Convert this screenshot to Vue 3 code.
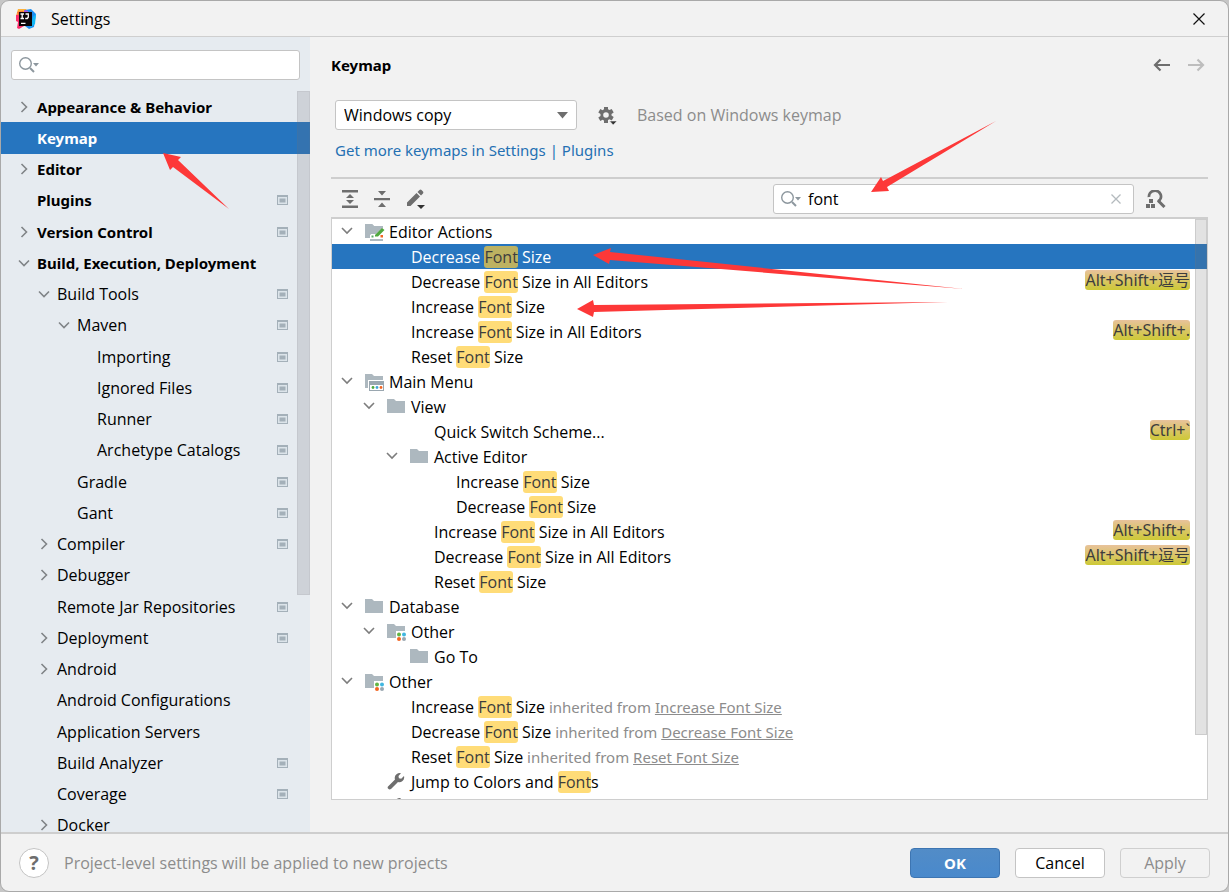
<script setup>
import { ref } from 'vue'

const sideQuery = ref('')
const query = ref('font')
const keymap = ref('Windows copy')

const sections = [
  { t: 'Appearance & Behavior', l: 0, a: 'right' },
  { t: 'Keymap', l: 0, selected: true },
  { t: 'Editor', l: 0, a: 'right' },
  { t: 'Plugins', l: 0, p: true },
  { t: 'Version Control', l: 0, a: 'right', p: true },
  { t: 'Build, Execution, Deployment', l: 0, a: 'down' },
  { t: 'Build Tools', l: 1, a: 'down', p: true },
  { t: 'Maven', l: 2, a: 'down', p: true },
  { t: 'Importing', l: 3, p: true },
  { t: 'Ignored Files', l: 3, p: true },
  { t: 'Runner', l: 3, p: true },
  { t: 'Archetype Catalogs', l: 3, p: true },
  { t: 'Gradle', l: 2, p: true },
  { t: 'Gant', l: 2, p: true },
  { t: 'Compiler', l: 1, a: 'right', p: true },
  { t: 'Debugger', l: 1, a: 'right' },
  { t: 'Remote Jar Repositories', l: 1, p: true },
  { t: 'Deployment', l: 1, a: 'right', p: true },
  { t: 'Android', l: 1, a: 'right' },
  { t: 'Android Configurations', l: 1 },
  { t: 'Application Servers', l: 1 },
  { t: 'Build Analyzer', l: 1, p: true },
  { t: 'Coverage', l: 1, p: true },
  { t: 'Docker', l: 1, a: 'right' }
]

const actions = [
  { l: 0, open: true, icon: 'edit', b: 'Editor Actions' },
  { l: 1, b: 'Decrease ', h: 'Font', e: ' Size', selected: true },
  { l: 1, b: 'Decrease ', h: 'Font', e: ' Size in All Editors', k: 'Alt+Shift+逗号' },
  { l: 1, b: 'Increase ', h: 'Font', e: ' Size' },
  { l: 1, b: 'Increase ', h: 'Font', e: ' Size in All Editors', k: 'Alt+Shift+.' },
  { l: 1, b: 'Reset ', h: 'Font', e: ' Size' },
  { l: 0, open: true, icon: 'menu', b: 'Main Menu' },
  { l: 1, open: true, icon: 'folder', b: 'View' },
  { l: 2, b: 'Quick Switch Scheme...', k: 'Ctrl+`' },
  { l: 2, open: true, icon: 'folder', b: 'Active Editor' },
  { l: 3, b: 'Increase ', h: 'Font', e: ' Size' },
  { l: 3, b: 'Decrease ', h: 'Font', e: ' Size' },
  { l: 2, b: 'Increase ', h: 'Font', e: ' Size in All Editors', k: 'Alt+Shift+.' },
  { l: 2, b: 'Decrease ', h: 'Font', e: ' Size in All Editors', k: 'Alt+Shift+逗号' },
  { l: 2, b: 'Reset ', h: 'Font', e: ' Size' },
  { l: 0, open: true, icon: 'folder', b: 'Database' },
  { l: 1, open: true, icon: 'other', b: 'Other' },
  { l: 2, icon: 'folder', b: 'Go To' },
  { l: 0, open: true, icon: 'other', b: 'Other' },
  { l: 1, b: 'Increase ', h: 'Font', e: ' Size', from: 'Increase Font Size' },
  { l: 1, b: 'Decrease ', h: 'Font', e: ' Size', from: 'Decrease Font Size' },
  { l: 1, b: 'Reset ', h: 'Font', e: ' Size', from: 'Reset Font Size' },
  { l: 1, icon: 'wrench', b: 'Jump to Colors and ', h: 'Font', e: 's' },
  { l: 1, icon: 'wrench', b: '' }
]
</script>

<template>
  <div class="window">
    <header class="titlebar">
      <svg class="logo" width="20" height="20" viewBox="0 0 20 20" aria-hidden="true">
        <path d="M2 0 10 0 12 3 4 10 0 7z" fill="#fdb13b" />
        <path d="M0 6 5 5 5 14 8 17 3 20 1 19 2 13 0 12z" fill="#fe2d6b" />
        <path d="M9 1 15 0 20 5 18 18 13 20 9 17z" fill="#1d8ef2" />
        <path d="M1 3 7 2 8 5 3 7z" fill="#fb6a35" />
        <path d="M8 1 12 2 12 4 8 4z" fill="#b24fd6" />
        <path d="M17 8 20 5 19 15 14 19z" fill="#12b8f5" />
        <rect x="3" y="3" width="13" height="14" fill="#0b0508" />
        <path d="M4.500 5h3.500M6.200 5v4.500M4.500 9.500h3.500M9.500 5h2.800v3.200l-1 1.300H9.200M5 14.300h4.500" stroke="#fff" stroke-width="1.300" fill="none" />
      </svg>
      <span class="title">Settings</span>
      <button class="icon-button close" aria-label="Close">
        <svg width="14" height="14" viewBox="0 0 14 14"><path d="m1.500 1.500 11 11m0-11-11 11" stroke="#111" stroke-width="1.200" /></svg>
      </button>
    </header>

    <div class="body">
      <aside class="sidebar">
        <label class="search side-search">
          <svg width="22" height="18" viewBox="0 0 22 18" aria-hidden="true">
            <circle cx="7.500" cy="7.500" r="5.800" fill="none" stroke="#8d979e" stroke-width="1.400" />
            <path d="m12 12 4 4" stroke="#8d979e" stroke-width="2" />
            <path d="M15 7h6l-3 3.500z" fill="#8d979e" />
          </svg>
          <input v-model="sideQuery" type="text" aria-label="Search settings" />
        </label>
        <div class="side-scroll">
          <ul class="side-list">
            <li v-for="s in sections" :key="s.t" :class="['side-row', 'depth-' + s.l, { selected: s.selected }]">
              <span class="arrow">
                <svg v-if="s.a === 'right'" width="12" height="12" viewBox="0 0 12 12"><path d="m3.500 1 5 5-5 5" fill="none" stroke="#808487" stroke-width="1.600" /></svg>
                <svg v-if="s.a === 'down'" width="12" height="12" viewBox="0 0 12 12"><path d="m1 3.500 5 5 5-5" fill="none" stroke="#808487" stroke-width="1.600" /></svg>
              </span>
              <span class="side-name">{{ s.t }}</span>
              <svg v-if="s.p" class="project" width="11" height="10" viewBox="0 0 11 10"><path d="M0 0h11v10H0z" fill="#a4b0b9" /><path d="M1 2h9v7H1z" fill="#dce4ea" /><path d="M2.500 3.500h6v4h-6z" fill="#a4b0b9" /></svg>
            </li>
          </ul>
          <div class="side-thumb"></div>
        </div>
      </aside>

      <main class="content">
        <div class="heading">
          <h1>Keymap</h1>
          <div class="history">
            <button class="icon-button" aria-label="Back"><svg width="18" height="14" viewBox="0 0 18 14"><path d="M17 7H2m5.500-5.500L2 7l5.500 5.500" fill="none" stroke="#6e6e6e" stroke-width="2.200" /></svg></button>
            <button class="icon-button" aria-label="Forward" disabled><svg width="18" height="14" viewBox="0 0 18 14"><path d="M1 7h15m-5.500-5.500L16 7l-5.500 5.500" fill="none" stroke="#bdbdbd" stroke-width="2.200" /></svg></button>
          </div>
        </div>

        <div class="scheme">
          <div class="select">
            <select v-model="keymap" aria-label="Keymap">
              <option>Windows copy</option>
            </select>
            <svg width="11" height="7" viewBox="0 0 11 7" aria-hidden="true"><path d="M0 0h11L5.500 6.500z" fill="#6e6e6e" /></svg>
          </div>
          <button class="icon-button" aria-label="Keymap options">
            <svg width="20" height="20" viewBox="0 0 20 20">
              <path d="M7 2h4v2.300l1.500.8L14.700 4l2 3.400L14.500 9v1.500l2.200 1.500-2 3.400-2.200-1.200-1.500.8V18H7v-2.500l-1.500-.8-2.200 1.200-2-3.400L3.500 11V9L1.300 7.400l2-3.400 2.200 1.200L7 4.300zM9 7.200a2.800 2.800 0 1 0 0 5.600 2.800 2.800 0 0 0 0-5.600z" fill="#6e6e6e" fill-rule="evenodd" />
              <path d="M12.500 16H20L16.200 20z" fill="#333" stroke="#f2f2f2" stroke-width=".6" />
            </svg>
          </button>
          <span class="muted">Based on Windows keymap</span>
        </div>
        <a class="more" href="#">Get more keymaps in Settings | Plugins</a>

        <div class="toolbar">
          <button class="icon-button" aria-label="Expand all">
            <svg width="16" height="18" viewBox="0 0 16 18"><path d="M0 0h16v2.500H0zM0 15.500h16V18H0zM8 4l4 4H4zM8 14l4-4H4z" fill="#6e6e6e" /></svg>
          </button>
          <button class="icon-button" aria-label="Collapse all">
            <svg width="16" height="18" viewBox="0 0 16 18"><path d="M0 8h16v2.300H0zM4 1h8L8 5.500zM4 17h8l-4-4.500z" fill="#6e6e6e" /></svg>
          </button>
          <button class="icon-button" aria-label="Edit shortcut">
            <svg width="20" height="20" viewBox="0 0 20 20"><path d="m1 13.500 9.500-9.500 3.500 3.500L4.500 17H1zM11.500 3l2-2q1-.8 2 0L17 2.500q.8 1 0 2l-2 2z" fill="#6e6e6e" /><path d="M11 16h8l-4 4z" fill="#333" /></svg>
          </button>
          <label class="search tool-search">
            <svg width="22" height="18" viewBox="0 0 22 18" aria-hidden="true">
              <circle cx="7.500" cy="7.500" r="5.800" fill="none" stroke="#8d979e" stroke-width="1.400" />
              <path d="m12 12 4 4" stroke="#8d979e" stroke-width="2" />
              <path d="M15 7h6l-3 3.500z" fill="#8d979e" />
            </svg>
            <input v-model="query" type="text" aria-label="Search actions" />
            <button class="icon-button" aria-label="Clear"><svg width="10" height="10" viewBox="0 0 10 10"><path d="m.5.5 9 9m0-9-9 9" stroke="#b4babe" stroke-width="1.300" /></svg></button>
          </label>
          <button class="icon-button" aria-label="Find by shortcut">
            <svg width="20" height="18" viewBox="0 0 20 18"><path d="M3 7a6 5.800 0 1 1 9 4.500" fill="none" stroke="#6e6e6e" stroke-width="2.800" /><path d="m12 10.500 6.500 6.500" stroke="#6e6e6e" stroke-width="3" /><path d="M3 9h4v4H3zM0 14h4v4H0zM5 14h4v4H5z" fill="#6e6e6e" /></svg>
          </button>
        </div>

        <div class="panel">
          <ul class="actions">
            <li v-for="(a, i) in actions" :key="i" :class="['action', 'level-' + a.l, { selected: a.selected }]">
              <span class="fold">
                <svg v-if="a.open" width="12" height="12" viewBox="0 0 12 12"><path d="m1 2 5 5 5-5" fill="none" stroke="#7d7d7d" stroke-width="1.600" /></svg>
              </span>
              <span class="kind">
                <svg v-if="a.icon === 'wrench'" width="18" height="18" viewBox="0 0 18 18"><path d="M1 13.500 8 6.500Q7 3 9.500 1.200T14 .3L11.500 3l.4 2.300 2.300.4L17 3q.8 3-1.500 5T11 9l-7 7Q2.500 17 1.300 15.800T1 13.500z" fill="#6e6e6e" /></svg>
                <svg v-else-if="a.icon" width="20" height="18" viewBox="0 0 20 18">
                  <path d="M0 1h7l2 2h9v12H0z" fill="#adb8bf" />
                  <template v-if="a.icon === 'edit'">
                    <path d="M5 12 15 3h5v15H5z" fill="#fff" />
                    <path d="M9 3h9v2l-7 6H6l-6 4V1h7z" fill="#adb8bf" />
                    <path d="m10 12 7-7 2.500 2-6.500 6.500H10z" fill="#4fa83d" />
                    <path d="M6.500 12.500h2v2h-2z" fill="#59a869" /><path d="M15.500 12h2.500v2.500h-2.500z" fill="#f26522" /><path d="M5 16h13v2H5z" fill="#adb8bf" />
                  </template>
                  <template v-if="a.icon === 'menu'">
                    <path d="M3 7h17v11H3z" fill="#fff" /><path d="M4 8h15v10H4z" fill="#9aa7b0" /><path d="M5 12h13v5H5z" fill="#fff" />
                    <circle cx="8" cy="14.500" r="1.400" fill="#4fa83d" /><circle cx="12" cy="14.500" r="1.400" fill="#40a6d8" /><circle cx="16" cy="14.500" r="1.400" fill="#f26522" />
                  </template>
                  <template v-if="a.icon === 'other'">
                    <path d="M9 8h11v10H9z" fill="#fff" />
                    <circle cx="12" cy="11.500" r="2" fill="#62b543" /><circle cx="17" cy="11.500" r="2" fill="#40b6e0" /><circle cx="12" cy="16" r="2" fill="#f26522" /><circle cx="17" cy="16" r="2" fill="#9aa7b0" />
                  </template>
                </svg>
              </span>
              <span class="action-name">{{ a.b }}<mark v-if="a.h">{{ a.h }}</mark>{{ a.e }}<span v-if="a.from" class="inherited">&nbsp;inherited from <a href="#">{{ a.from }}</a></span></span>
              <kbd v-if="a.k">{{ a.k }}</kbd>
            </li>
          </ul>
          <div class="panel-thumb"></div>
        </div>
      </main>
    </div>

    <footer class="footer">
      <button class="help" aria-label="Help">?</button>
      <span class="muted note">Project-level settings will be applied to new projects</span>
      <button class="button primary">OK</button>
      <button class="button">Cancel</button>
      <button class="button" disabled>Apply</button>
    </footer>

    <svg class="pointers" aria-hidden="true">
      <g fill="#fd3838">
        <path d="M162 152 180 156 177 159 228 208 172 166 169 169z" />
        <path d="M870 191 880 176 882 180 995 120 886 186 888 190z" />
        <path d="M592 254 610 247 609 251 963 288 609 259 608 263z" />
        <path d="M576 308 592 299 593 304 947 301 593 311 592 316z" />
      </g>
    </svg>
  </div>
</template>

<style>
html {
  background: #c6c6c6;
}
</style>

<style scoped>
.window {
  position: relative;
  display: flex;
  flex-direction: column;
  box-sizing: border-box;
  height: 100vh;
  overflow: hidden;
  border: 1px solid #a9a9a9;
  border-radius: 9px;
  background: #f2f2f2;
  color: #000;
  font-family: "Open Sans", "Noto Sans CJK SC", sans-serif;
  font-size: 16px;
  line-height: 20px;
}
ul {
  margin: 0;
  padding: 0;
  list-style: none;
}
svg {
  display: block;
  flex: none;
}
button,
input,
select {
  font: inherit;
  color: inherit;
}
.icon-button {
  display: flex;
  padding: 0;
  border: 0;
  background: none;
}
.titlebar {
  display: flex;
  flex: none;
  align-items: center;
  height: 35px;
  padding: 0 22px 0 15px;
  border-bottom: 1px solid #cfcfcf;
}
.title {
  flex: 1;
  margin-left: 15px;
}
.body {
  display: flex;
  flex: 1;
  min-height: 0;
}
.sidebar {
  display: flex;
  flex: none;
  flex-direction: column;
  width: 309px;
  background: #e6ebf0;
}
.search {
  display: flex;
  align-items: center;
  box-sizing: border-box;
  height: 30px;
  padding: 0 12px 0 6px;
  border: 1px solid #c4c4c4;
  border-radius: 3px;
  background: #fff;
}
.search input {
  flex: 1;
  min-width: 0;
  padding: 0 6px;
  border: 0;
  outline: 0;
  background: none;
}
.side-search {
  flex: none;
  margin: 13px 10px 11px;
}
.side-scroll {
  position: relative;
  display: flex;
  flex: 1;
  min-height: 0;
  overflow: hidden;
}
.side-list {
  display: flex;
  flex: 1;
  flex-direction: column;
  margin-bottom: -9px;
}
.side-row {
  display: flex;
  flex: 1 0 31px;
  align-items: center;
  padding: 0 22px 0 17px;
}
.depth-0,
h1,
.more,
.inherited,
.primary {
  font-family: "Noto Sans", sans-serif;
  font-size: 15px;
}
.depth-0,
h1,
.primary {
  font-weight: bold;
}
.depth-1 {
  padding-left: 37px;
}
.depth-2 {
  padding-left: 57px;
}
.depth-3 {
  padding-left: 77px;
}
.arrow {
  width: 19px;
}
.side-name {
  flex: 1;
}
.selected {
  background: #2675bf;
  color: #fff;
}
.side-thumb {
  position: absolute;
  top: 0;
  right: 0;
  box-sizing: border-box;
  width: 13px;
  height: 68%;
  border: 1px solid rgba(120, 120, 120, 0.1);
  background: rgba(110, 110, 120, 0.2);
}
.content {
  display: flex;
  flex: 1;
  flex-direction: column;
  min-width: 0;
  padding: 18px 20px 32px 21px;
}
.heading,
.history,
.scheme,
.toolbar {
  display: flex;
  align-items: center;
}
.heading {
  justify-content: space-between;
}
h1 {
  margin: 0;
}
.history {
  gap: 16px;
  padding-right: 3px;
}
.scheme {
  gap: 20px;
  margin-top: 25px;
  padding-left: 4px;
}
.select {
  position: relative;
}
.select select {
  width: 242px;
  height: 30px;
  padding: 0 8px;
  border: 1px solid #c4c4c4;
  border-radius: 3px;
  background: #fff;
  appearance: none;
}
.select svg {
  position: absolute;
  top: 12px;
  right: 9px;
  pointer-events: none;
}
.muted {
  color: #8c8c8c;
}
.more {
  align-self: flex-start;
  margin: 10px 4px 17px;
  color: #2470b3;
  text-decoration: none;
}
.toolbar {
  gap: 16px;
  padding: 5px 42px 3px 11px;
  border-top: 2px solid #cecece;
}
.toolbar .tool-search {
  width: 361px;
  margin-left: auto;
  margin-right: -4px;
}
.panel {
  position: relative;
  flex: 1;
  min-height: 0;
  overflow: hidden;
  border: 1px solid #cecece;
  border-top-width: 2px;
  background: #fff;
}
.action {
  display: flex;
  align-items: center;
  height: 25px;
  padding: 0 17px 0 9px;
}
.level-1 {
  padding-left: 31px;
}
.level-2 {
  padding-left: 54px;
}
.level-3 {
  padding-left: 76px;
}
.fold,
.kind {
  flex: none;
  width: 24px;
}
.action-name {
  flex: 1;
  white-space: pre;
}
mark,
kbd {
  border-radius: 3px;
  color: #3d3d3d;
}
mark {
  background: #ffdc78;
}
.selected mark {
  background: #bdb261;
}
kbd {
  align-self: flex-start;
  margin-top: 1px;
  background: linear-gradient(#e8c29b, #cdc936);
  font-family: "Noto Sans", "Noto Sans CJK SC", sans-serif;
  font-size: 16px;
}
.inherited,
.inherited a {
  color: #8c8c8c;
}
.panel-thumb {
  position: absolute;
  top: 0;
  right: 0;
  box-sizing: border-box;
  width: 12px;
  height: 89%;
  border: 1px solid rgba(120, 120, 120, 0.2);
  background: rgba(110, 110, 110, 0.2);
}
.footer {
  display: flex;
  flex: none;
  align-items: center;
  gap: 15px;
  height: 57px;
  padding: 0 18px;
  border-top: 2px solid #cecece;
}
.help {
  width: 30px;
  height: 30px;
  padding: 0;
  border: 1px solid #c4c4c4;
  border-radius: 50%;
  background: #fff;
  color: #6e6e6e;
  font-size: 20px;
  font-weight: bold;
}
.note {
  flex: 1;
}
.button {
  width: 90px;
  height: 30px;
  padding: 0;
  border: 1px solid #c4c4c4;
  border-radius: 4px;
  background: #fff;
}
.primary {
  border-color: #3d75b2;
  background: linear-gradient(#528cc7, #4989cc);
  color: #fff;
}
.button:disabled {
  border-color: #cfcfcf;
  background: #f2f2f2;
  color: #8c8c8c;
}
.pointers {
  position: absolute;
  top: 0;
  left: 0;
  width: 100%;
  height: 100%;
  pointer-events: none;
}
</style>
